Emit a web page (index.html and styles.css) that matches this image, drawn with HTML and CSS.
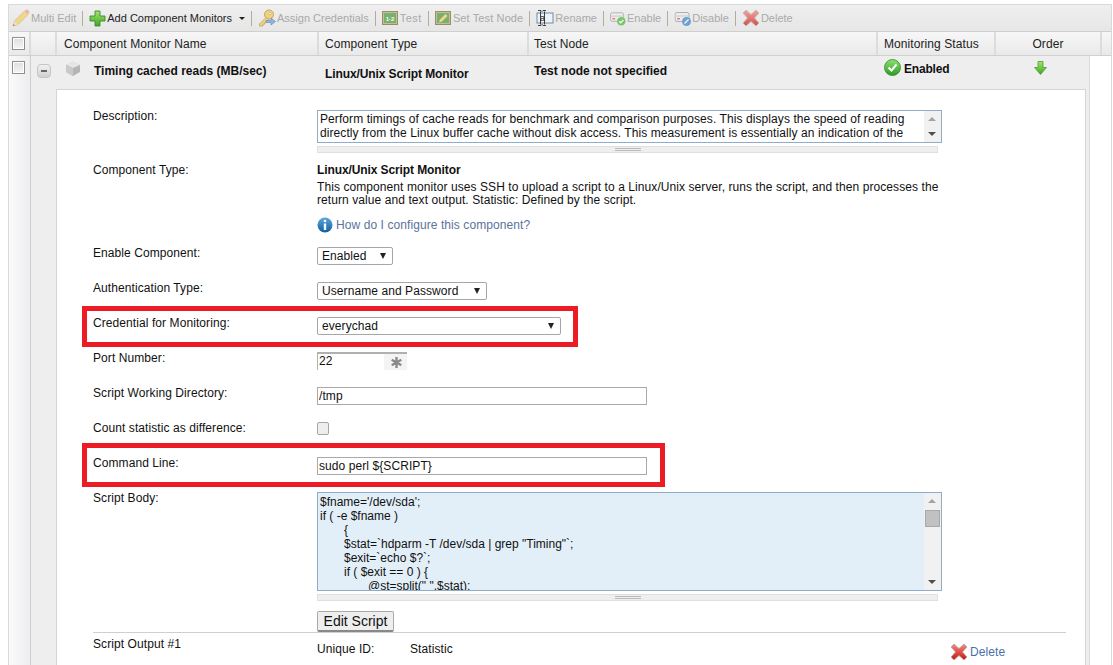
FILE: index.html
```html
<!DOCTYPE html>
<html lang="en">
<head>
<meta charset="utf-8">
<title>Component Monitors</title>
<link rel="stylesheet" href="styles.css">
</head>
<body>
<svg class="defs" width="0" height="0" aria-hidden="true">
  <defs>
    <linearGradient id="gX" x1="0" y1="0" x2="0" y2="1"><stop offset="0" stop-color="#f58a7c"/><stop offset="1" stop-color="#c8170f"/></linearGradient>
    <linearGradient id="gG" x1="0" y1="0" x2="0" y2="1"><stop offset="0" stop-color="#a5e36a"/><stop offset="1" stop-color="#3fa626"/></linearGradient>
    <linearGradient id="gC" x1="0" y1="0" x2="0" y2="1"><stop offset="0" stop-color="#8fe070"/><stop offset="1" stop-color="#2a9d22"/></linearGradient>
    <linearGradient id="gI" x1="0" y1="0" x2="0" y2="1"><stop offset="0" stop-color="#5ca8de"/><stop offset="1" stop-color="#0f5f9f"/></linearGradient>
    <symbol id="i-x" viewBox="0 0 18 18"><path d="M4 1l5 4.500L14 1l3 3-4.500 5L17 14l-3 3-5-4.500L4 17l-3-3 4.500-5L1 4z" fill="url(#gX)" stroke="#a9a9a9" stroke-width=".8"/></symbol>
    <symbol id="i-drive" viewBox="0 0 17 16"><rect x=".5" y="2.500" width="14" height="9" rx="2" fill="#eee" stroke="#999"/><rect x="1.500" y="5.500" width="12" height="1" fill="#bbb"/><rect x="2.500" y="8" width="3" height="1.500" fill="#d55"/></symbol>
  </defs>
</svg>
<div class="grid-box">
  <div class="toolbar">
    <span class="tool off">
      <svg class="ico" width="18" height="18" viewBox="0 0 18 18"><path d="M1 17l1.500-5L12.500 2l3.500 3.500L6 15.500z" fill="#f2d264" stroke="#c9a94c" stroke-width=".7"/><path d="M12.500 2 14 .8c.6-.4 1.200-.4 1.700 0l1.400 1.400c.4.500.4 1.100 0 1.700L16 5.500z" fill="#ee9f9f"/><path d="M1 17l1.500-5 3.500 3.500z" fill="#eed9b4"/><path d="M1 17l.6-2 1.400 1.400z" fill="#555"/></svg>
      <span>Multi Edit</span>
    </span>
    <i class="bar"></i>
    <span class="tool">
      <svg class="ico" width="17" height="17" viewBox="0 0 17 17"><path d="M6 1h5v5h5v5h-5v5H6v-5H1V6h5z" fill="url(#gG)" stroke="#3d8a2c" stroke-width=".9"/></svg>
      <span>Add Component Monitors</span>
      <b class="caret"></b>
    </span>
    <i class="bar"></i>
    <span class="tool off">
      <svg class="ico" width="18" height="18" viewBox="0 0 18 18"><circle cx="11" cy="5.500" r="4.500" fill="#f5c95a" stroke="#b58a2a"/><circle cx="12" cy="4.500" r="1.200" fill="#fff" stroke="#b58a2a" stroke-width=".6"/><path d="M8 8.500 1.500 15v2H5v-2h2v-2h1.500l2-2.500z" fill="#f5c95a" stroke="#b58a2a" stroke-width=".8"/><path d="M8 11.500h5V9l4.500 3.500L13 16v-2.500H8z" fill="#6aa3e0" stroke="#3c6fb0" stroke-width=".7"/></svg>
      <span>Assign Credentials</span>
    </span>
    <i class="bar"></i>
    <span class="tool off wide-gap">
      <svg class="ico" width="16" height="14" viewBox="0 0 16 14"><rect x=".5" y=".5" width="15" height="13" fill="#b9ad76" stroke="#7a6a34"/><rect x="2" y="2" width="12" height="10" fill="#4d9b3d"/><text x="8" y="9.500" class="ico-text">1·2</text></svg>
      <span class="ls-test">Test</span>
    </span>
    <i class="bar"></i>
    <span class="tool off wide-gap">
      <svg class="ico" width="16" height="14" viewBox="0 0 16 14"><rect x=".5" y=".5" width="15" height="13" fill="#b9ad76" stroke="#7a6a34"/><rect x="2" y="2" width="12" height="10" fill="#4d9b3d"/><path d="M4 11.500l1-3L10.500 3l2 2L7 10.500z" fill="#f3d264"/></svg>
      <span class="ls-node">Set Test Node</span>
    </span>
    <i class="bar"></i>
    <span class="tool off dark-ico">
      <svg class="ico" width="18" height="16" viewBox="0 0 18 16"><rect x="1" y="3" width="16" height="10" fill="#eef3f8" stroke="#6a86a8"/><path d="M2 .5h3l1 1 1-1h3M2 15.500h3l1-1 1 1h3M4.500 1.500v13M8.500 1.500v13" stroke="#222" fill="none" stroke-width=".9"/><text x="6.500" y="11" class="ico-a">a</text></svg>
      <span>Rename</span>
    </span>
    <i class="bar"></i>
    <span class="tool off">
      <svg class="ico" width="16" height="16" viewBox="0 0 17 16"><use href="#i-drive"/><circle cx="12" cy="11.500" r="4.500" fill="#4fb83a"/><path d="M9.800 11.500l1.600 1.600 2.800-3" stroke="#fff" stroke-width="1.300" fill="none"/></svg>
      <span>Enable</span>
    </span>
    <i class="bar"></i>
    <span class="tool off no-gap">
      <svg class="ico" width="18" height="16" viewBox="0 0 17 16"><use href="#i-drive"/><circle cx="12" cy="11.500" r="4.500" fill="#3d87c8"/><path d="M10 13.500l4-4" stroke="#fff" stroke-width="1.300"/></svg>
      <span>Disable</span>
    </span>
    <i class="bar"></i>
    <span class="tool off">
      <svg class="ico" width="18" height="18"><use href="#i-x"/></svg>
      <span>Delete</span>
    </span>
  </div>

  <div class="head">
    <div class="hc c-check"><i class="box"></i></div>
    <div class="hc c-exp"></div>
    <div class="hc c-name">Component Monitor Name</div>
    <div class="hc c-type">Component Type</div>
    <div class="hc c-node">Test Node</div>
    <div class="hc c-status">Monitoring Status</div>
    <div class="hc c-order">Order</div>
    <div class="hc c-end"></div>
  </div>

  <div class="body-wrap">
    <div class="gutter"><i class="box"></i></div>
    <div class="monitor">
      <div class="summary">
        <div class="s-exp"><i class="minus"></i></div>
        <svg class="cube" width="16" height="14" viewBox="0 0 16 14"><path d="M8 0l7 3v7l-7 4-7-4V3z" fill="#b5b5b5"/><path d="M8 0l7 3-7 3-7-3z" fill="#e6e6e6"/><path d="M1 3l7 3v8l-7-4z" fill="#c9c9c9"/></svg>
        <span class="s-name">Timing cached reads (MB/sec)</span>
        <span class="s-type">Linux/Unix Script Monitor</span>
        <span class="s-node">Test node not specified</span>
        <span class="s-status">
          <svg width="17" height="17" viewBox="0 0 17 17"><circle cx="8.500" cy="8.500" r="8" fill="url(#gC)" stroke="#2c8a26" stroke-width=".8"/><path d="M4.500 8.500l3 3 5-6" stroke="#fff" stroke-width="2" fill="none"/></svg>
          <span class="s-label">Enabled</span>
        </span>
        <svg class="s-order" width="13" height="14" viewBox="0 0 13 14"><path d="M4 .5h5v6h3.500L6.500 13.500.5 6.500H4z" fill="url(#gG)" stroke="#4f9a32" stroke-width=".8"/></svg>
      </div>

      <div class="panel">
        <div class="row r-desc">
          <label class="lbl">Description:</label>
          <div class="val">
            <div class="area area-desc">
              <div class="area-text">Perform timings of cache reads for benchmark and comparison purposes. This displays the speed of reading directly from the Linux buffer cache without disk access. This measurement is essentially an indication of the</div>
              <div class="sb"><b class="up"></b><b class="down"></b></div>
            </div>
            <div class="grip"><i></i></div>
          </div>
        </div>

        <div class="row r-type">
          <label class="lbl lbl-type">Component Type:</label>
          <div class="val">
            <div class="type-title">Linux/Unix Script Monitor</div>
            <p class="type-desc">This component monitor uses SSH to upload a script to a Linux/Unix server, runs the script, and then processes the return value and text output. Statistic: Defined by the script.</p>
            <a class="help">
              <svg width="16" height="16" viewBox="0 0 16 16"><circle cx="8" cy="8" r="7.500" fill="url(#gI)"/><circle cx="8" cy="4" r="1.300" fill="#fff"/><rect x="6.800" y="6.500" width="2.400" height="6.500" fill="#fff"/></svg>
              How do I configure this component?
            </a>
          </div>
        </div>

        <div class="row">
          <label class="lbl">Enable Component:</label>
          <div class="val"><div class="sel w-enable"><span>Enabled</span><b></b></div></div>
        </div>
        <div class="row">
          <label class="lbl">Authentication Type:</label>
          <div class="val"><div class="sel w-auth"><span>Username and Password</span><b></b></div></div>
        </div>
        <div class="row">
          <label class="lbl">Credential for Monitoring:</label>
          <div class="val"><div class="sel w-cred"><span>everychad</span><b></b></div></div>
        </div>
        <div class="row">
          <label class="lbl">Port Number:</label>
          <div class="val">
            <div class="port"><span>22</span>
              <svg width="13" height="13" viewBox="0 0 13 13"><path d="M6.500 1v11M1.700 3.700l9.600 5.600M11.300 3.700l-9.600 5.600" stroke="#8a8a8a" stroke-width="2.400"/></svg>
            </div>
          </div>
        </div>
        <div class="row">
          <label class="lbl">Script Working Directory:</label>
          <div class="val"><div class="inp">/tmp</div></div>
        </div>
        <div class="row">
          <label class="lbl">Count statistic as difference:</label>
          <div class="val"><i class="chk"></i></div>
        </div>
        <div class="row">
          <label class="lbl">Command Line:</label>
          <div class="val"><div class="inp">sudo perl ${SCRIPT}</div></div>
        </div>
        <div class="row r-body">
          <label class="lbl">Script Body:</label>
          <div class="val">
            <div class="area area-body">
<pre class="code">$fname='/dev/sda';
if ( -e $fname )
&#9;{
&#9;$stat=`hdparm -T /dev/sda | grep "Timing"`;
&#9;$exit=`echo $?`;
&#9;if ( $exit == 0 ) {
&#9;&#9;@st=split(" ",$stat);</pre>
              <div class="sb"><b class="up"></b><i class="thumb"></i><b class="down"></b></div>
            </div>
            <div class="grip"><i></i></div>
            <button class="btn" type="button">Edit Script</button>
          </div>
        </div>
        <div class="output">
          <span class="o-label">Script Output #1</span>
          <span class="o-uid">Unique ID:</span>
          <span class="o-stat">Statistic</span>
          <a class="o-del"><svg width="18" height="18"><use href="#i-x"/></svg>Delete</a>
        </div>
        <div class="mark mark-cred"></div>
        <div class="mark mark-cmd"></div>
      </div>
    </div>
  </div>
</div>
</body>
</html>
```
FILE: styles.css
```css
* { box-sizing: border-box; }
html, body { margin: 0; height: 100%; }
body {
  overflow: hidden;
  background: #fff;
  font: 12px/13px "Liberation Sans", Arial, sans-serif;
  letter-spacing: .08px;
  color: #111;
}
.defs { position: absolute; }
.grid-box {
  margin: 4px 1px 0 8px;
  height: 661px;
  border: 1px solid #d9d9d9;
  border-bottom: 0;
  overflow: hidden;
}
.toolbar {
  height: 27px;
  display: flex;
  align-items: center;
  padding-left: 3px;
  background: linear-gradient(#efefef, #e6e6e6);
  border-bottom: 1px solid #cfcfcf;
  font-size: 11px;
  letter-spacing: 0;
  white-space: nowrap;
}
.tool { display: flex; align-items: center; gap: 1px; color: #222; }
.tool.off > span { color: #a9a9a9; }
.tool.off .ico { opacity: .72; }
.tool.dark-ico .ico { opacity: .95; }
.wide-gap { gap: 2px; }
.no-gap { gap: 0; }
.ls-test { letter-spacing: .5px; }
.ls-node { letter-spacing: .12px; }
.bar { width: 1px; height: 15px; margin: 0 6px; background: #b4ad98; }
.caret {
  width: 0; height: 0; margin: 1px 0 0 6px;
  border: 3px solid transparent;
  border-top: 3px solid #222;
  border-bottom: 0;
}
.ico-text { font: bold 6px "Liberation Sans", sans-serif; fill: #fff; text-anchor: middle; }
.ico-a { font: 9px "Liberation Sans", sans-serif; fill: #222; text-anchor: middle; }

.head {
  height: 24px;
  display: grid;
  grid-template-columns: 22px 26px 262px 210px 349px 118px 106px 1fr;
  background: linear-gradient(#f7f7f7, #e9e9e9);
  border-bottom: 1px solid #d0d0d0;
  color: #222;
}
.hc {
  display: flex;
  align-items: center;
  padding: 2px 0 0 6px;
  border-right: 2px solid #dcdcdc;
}
.c-check { padding: 0 0 0 3px; }
.c-name { padding-left: 7px; }
.c-node { padding-left: 5px; }
.c-order { justify-content: center; padding-left: 0; }
.c-end { border-right: 0; }
.box {
  display: block;
  width: 13px; height: 13px;
  background: linear-gradient(#dedede, #f5f5f5);
  border: 1px solid #8f8f8f;
  box-shadow: inset 0 0 0 1px #fff;
}
.body-wrap { display: flex; align-items: stretch; height: 610px; }
.gutter {
  width: 22px;
  padding: 5px 0 0 3px;
  border-right: 1px solid #cdcdcd;
  background: linear-gradient(90deg, #fafafa, #ededf0);
}
.monitor {
  width: 1059px;
  background: #eee;
  border-right: 1px solid #ddd;
  padding-left: 25px;
  padding-right: 3px;
}
.summary {
  height: 33px;
  display: flex;
  align-items: flex-start;
  font-weight: bold;
  letter-spacing: 0;
  margin-left: -25px;
  white-space: nowrap;
}
.s-exp { width: 25px; padding: 8px 0 0 6px; }
.minus {
  display: block;
  width: 14px; height: 14px;
  border-radius: 4px;
  background: linear-gradient(#f2f2f2, #cfcfcf);
  border: 1px solid #c4c4c4;
  position: relative;
}
.minus::after {
  content: "";
  position: absolute;
  left: 3px; top: 5px;
  width: 6px; height: 2px;
  background: #666;
}
.cube { margin: 6px 0 0 9px; flex: none; }
.s-name { margin: 9px 0 0 13px; width: 231px; flex: none; }
.s-type { margin-top: 12px; width: 209px; flex: none; letter-spacing: -.1px; }
.s-node { margin-top: 9px; width: 350px; flex: none; }
.s-status { display: flex; align-items: center; gap: 3px; margin-top: 3px; width: 150px; flex: none; }
.s-label { margin-top: 3px; letter-spacing: -.2px; }
.s-order { margin-top: 5px; flex: none; }

.panel {
  position: relative;
  height: 600px;
  background: #fff;
  border: 1px solid #d5d5d5;
  border-bottom: 0;
  padding: 0 19px 0 36px;
}
.row { display: flex; height: 35px; }
.lbl { width: 224px; flex: none; }
.lbl-type { padding-top: 1px; }
.val { flex: 1; min-width: 0; }
.r-desc { height: 73px; padding-top: 20px; }
.r-type { height: 84px; }
.r-body { height: 140px; }
.area {
  display: flex;
  width: 625px;
  border: 1px solid #8facc8;
  overflow: hidden;
  background: #fff;
}
.area-desc { height: 33px; }
.area-body { height: 99px; background: #e3eff8; }
.area-text { flex: 1; padding: 1px 3px 1px 2px; line-height: 14px; }
.code {
  flex: 1;
  margin: 0;
  padding: 2px;
  font: 12px/14px "Liberation Sans", Arial, sans-serif;
  letter-spacing: 0;
  tab-size: 24px;
  white-space: pre;
  overflow: hidden;
}
.sb {
  width: 17px;
  flex: none;
  background: #f1f1f1;
  position: relative;
}
.up, .down {
  position: absolute;
  left: 4px;
  width: 0; height: 0;
  border-left: 4px solid transparent;
  border-right: 4px solid transparent;
}
.up { top: 6px; border-bottom: 4px solid #a3a3a3; }
.down { bottom: 6px; border-top: 4px solid #505050; }
.thumb {
  position: absolute;
  left: 1px; top: 17px;
  width: 15px; height: 17px;
  background: #c1c1c1;
  border: 1px solid #a8a8a8;
}
.grip {
  width: 621px;
  height: 7px;
  margin-top: 3px;
  background: #efefef;
  border: 1px solid #e0e0e0;
  display: flex;
  justify-content: center;
  align-items: center;
}
.grip i {
  display: block;
  width: 26px; height: 3px;
  border-top: 1px solid #bbb;
  border-bottom: 1px solid #bbb;
}
.type-title { font-weight: bold; letter-spacing: -.1px; padding-top: 1px; }
.type-desc { margin: 4px 0 0; width: 625px; line-height: 13px; }
.help { display: flex; align-items: center; gap: 3px; margin-top: 10px; color: #5a739c; }
.sel {
  height: 18px;
  display: flex;
  align-items: center;
  justify-content: space-between;
  padding: 0 6px 0 4px;
  border: 1px solid #a6a6a6;
  border-radius: 2px;
  background: #fff;
}
.sel b {
  width: 0; height: 0;
  border-left: 3.500px solid transparent;
  border-right: 3.500px solid transparent;
  border-top: 6px solid #222;
}
.w-enable { width: 76px; }
.w-auth { width: 170px; }
.w-cred { width: 244px; }
.port {
  width: 90px;
  height: 18px;
  display: flex;
  justify-content: space-between;
  align-items: center;
  padding-right: 4px;
  background: #f4f4f4;
  border-top: 2px solid #b0b0b0;
  border-left: 1px solid #b0b0b0;
}
.port span { background: #fff; flex: 1; align-self: stretch; padding: 1px 0 0 1px; margin-right: 6px; }
.inp {
  width: 330px;
  height: 18px;
  padding: 2px 1px;
  border: 1px solid #a9a9a9;
  background: #fff;
}
.chk {
  display: block;
  width: 12px; height: 13px;
  border: 1px solid #a6a6a6;
  border-radius: 2px;
  background: #eee;
}
.btn {
  display: block;
  margin-top: 10px;
  width: 77px;
  height: 21px;
  padding: 0;
  font: 14px "Liberation Sans", Arial, sans-serif;
  color: #111;
  background: #eee;
  border: 1px solid #aaa;
  border-bottom: 2px solid #888;
  border-radius: 2px;
}
.output {
  display: flex;
  width: 973px;
  border-top: 1px solid #cfcfcf;
  padding-top: 5px;
}
.o-label { width: 224px; }
.o-uid { width: 93px; padding-top: 5px; }
.o-stat { width: 540px; padding-top: 5px; }
.o-del { display: flex; align-items: center; gap: 2px; color: #4a6fa8; margin-top: 5px; height: 18px; }
.mark {
  position: absolute;
  border: 5px solid #ed1c24;
}
.mark-cred { left: 25px; top: 216px; width: 496px; height: 41px; }
.mark-cmd { left: 25px; top: 353px; width: 583px; height: 44px; }
```
